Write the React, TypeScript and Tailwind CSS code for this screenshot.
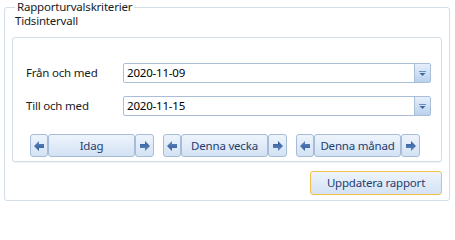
import React from "react";

function Arrow({ dir }: { dir: "left" | "right" }) {
  return (
    <svg width="10" height="10" viewBox="0 0 10 10" className={dir === "right" ? "rotate-180" : ""}>
      <defs>
        <linearGradient id={"ag" + dir} x1="0" y1="0" x2="0" y2="1">
          <stop offset="0" stopColor="#5f88c2" />
          <stop offset="1" stopColor="#2f5c9c" />
        </linearGradient>
      </defs>
      <path d="M0 5 L5 0 L5 3 L10 3 L10 7 L5 7 L5 10 Z" fill={"url(#ag" + dir + ")"} />
    </svg>
  );
}

const seg =
  "h-[23px] border border-[#a6bcd7] rounded-[3px] bg-linear-to-b from-[#eef4fc] to-[#d3e2f4] flex items-center justify-center";

function NavGroup({ label }: { label: string }) {
  return (
    <div className="flex">
      <div className={seg + " w-[18px]"}>
        <Arrow dir="left" />
      </div>
      <div className={seg + " w-[87px] text-[#1f3d6e]"}>{label}</div>
      <div className={seg + " w-[19px]"}>
        <Arrow dir="right" />
      </div>
    </div>
  );
}

function Combo({ value }: { value: string }) {
  return (
    <div className="flex w-[308px] h-[20px] border border-[#a9bfd8] rounded-[2px] bg-white">
      <div className="flex-1 pl-[3px] leading-[18px] text-black">{value}</div>
      <div className="w-[16px] h-full border-l border-[#a9bfd8] bg-linear-to-b from-[#e6effa] to-[#b9d1ef] flex items-center justify-center">
        <svg width="7" height="5" viewBox="0 0 7 5">
          <rect x="0" y="0" width="7" height="1" fill="#6b8fc2" />
          <path d="M0.5 2 L6.5 2 L3.5 5 Z" fill="#3f67a6" />
        </svg>
      </div>
    </div>
  );
}

export default function App() {
  return (
    <div className="w-[455px] h-[205px] bg-white text-[11.5px] tracking-[-0.2px] text-[#1b1b1b] font-['Noto_Sans',sans-serif] overflow-hidden pt-[7px] pl-[4px]">
      <div className="w-[446px] h-[194px] border border-[#d3dee9] rounded-[3px] px-[7px]">
        <div className="-mt-[8px] ml-[3px] w-fit px-[2px] bg-white leading-[14px]">Rapporturvalskriterier</div>
        <div className="ml-[3px] leading-[14px]">Tidsintervall</div>
        <div className="mt-[9px] h-[125px] border border-[#d3dee9] rounded-[3px] pt-[25px] pl-[13px] pr-[10px] shadow-[0_1px_0_#eef2f6]">
          <div className="flex items-center">
            <div className="w-[97px]">Från och med</div>
            <Combo value="2020-11-09" />
          </div>
          <div className="flex items-center mt-[13px]">
            <div className="w-[97px]">Till och med</div>
            <Combo value="2020-11-15" />
          </div>
          <div className="flex gap-[9px] ml-[4px] mt-[18px]">
            <NavGroup label="Idag" />
            <NavGroup label="Denna vecka" />
            <NavGroup label="Denna månad" />
          </div>
        </div>
        <div className="flex justify-end mt-[9px]">
          <div className="w-[132px] h-[24px] border border-[#f1c14a] rounded-[3px] bg-linear-to-b from-[#eef4fc] to-[#d3e2f4] flex items-center justify-center text-[#1f3d6e]">
            Uppdatera rapport
          </div>
        </div>
      </div>
    </div>
  );
}
